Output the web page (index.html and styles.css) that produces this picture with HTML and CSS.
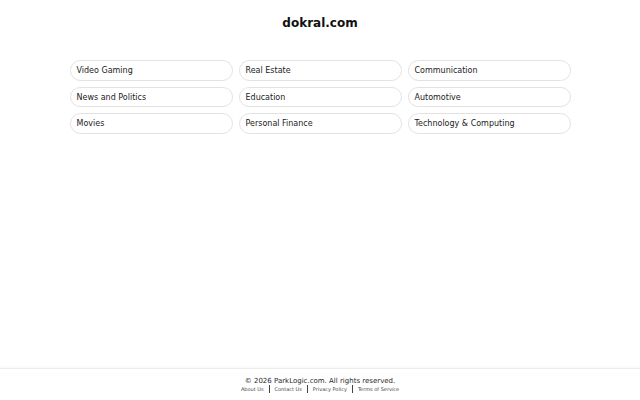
FILE: index.html
```html
<!DOCTYPE html>
<html lang="en">
<head>
<meta charset="utf-8">
<title>dokral.com</title>
<link rel="stylesheet" href="styles.css">
</head>
<body>
<div class="page">
  <main class="main">
    <h1 class="title">dokral.com</h1>
    <div class="grid">
      <a class="pill" href="#">Video Gaming</a>
      <a class="pill" href="#">Real Estate</a>
      <a class="pill" href="#">Communication</a>
      <a class="pill" href="#">News and Politics</a>
      <a class="pill" href="#">Education</a>
      <a class="pill" href="#">Automotive</a>
      <a class="pill" href="#">Movies</a>
      <a class="pill" href="#">Personal Finance</a>
      <a class="pill" href="#">Technology &amp; Computing</a>
    </div>
  </main>
  <footer class="footer">
    <div class="copy">© 2026 ParkLogic.com. All rights reserved.</div>
    <nav class="links">
      <a href="#">About Us</a>
      <span class="sep"></span>
      <a href="#">Contact Us</a>
      <span class="sep"></span>
      <a href="#">Privacy Policy</a>
      <span class="sep"></span>
      <a href="#">Terms of Service</a>
    </nav>
  </footer>
</div>
</body>
</html>
```
FILE: styles.css
```css
html, body {
  margin: 0;
  padding: 0;
  background: #fff;
  font-family: "DejaVu Sans", "Liberation Sans", sans-serif;
  color: #222;
}
.page {
  min-height: 100vh;
  display: flex;
  flex-direction: column;
}
.main {
  flex: 1;
  display: flex;
  flex-direction: column;
  align-items: center;
}
.title {
  margin: 16px 0 0;
  font-size: 12px;
  line-height: 14px;
  font-weight: bold;
  color: #111;
}
.grid {
  margin-top: 30px;
  width: 501px;
  display: grid;
  grid-template-columns: repeat(3, 1fr);
  column-gap: 6px;
  row-gap: 6px;
}
.pill {
  display: block;
  border: 1px solid #e2e2e2;
  border-radius: 11px;
  padding: 5px 6px 3.5px;
  font-size: 8px;
  line-height: 10px;
  color: #222;
  text-decoration: none;
}
.footer {
  border-top: 1px solid #ececec;
  box-shadow: 0 -1px 2px rgba(0,0,0,0.03);
  padding: 8px 0 7px;
  display: flex;
  flex-direction: column;
  align-items: center;
}
.copy {
  font-size: 7px;
  line-height: 8px;
  color: #2a2a2a;
}
.links {
  height: 8px;
  display: flex;
  align-items: center;
  gap: 5px;
}
.links a {
  font-size: 5px;
  line-height: 6px;
  color: #444;
  text-decoration: none;
}
.sep {
  width: 1px;
  height: 8px;
  background: #444;
}
```
